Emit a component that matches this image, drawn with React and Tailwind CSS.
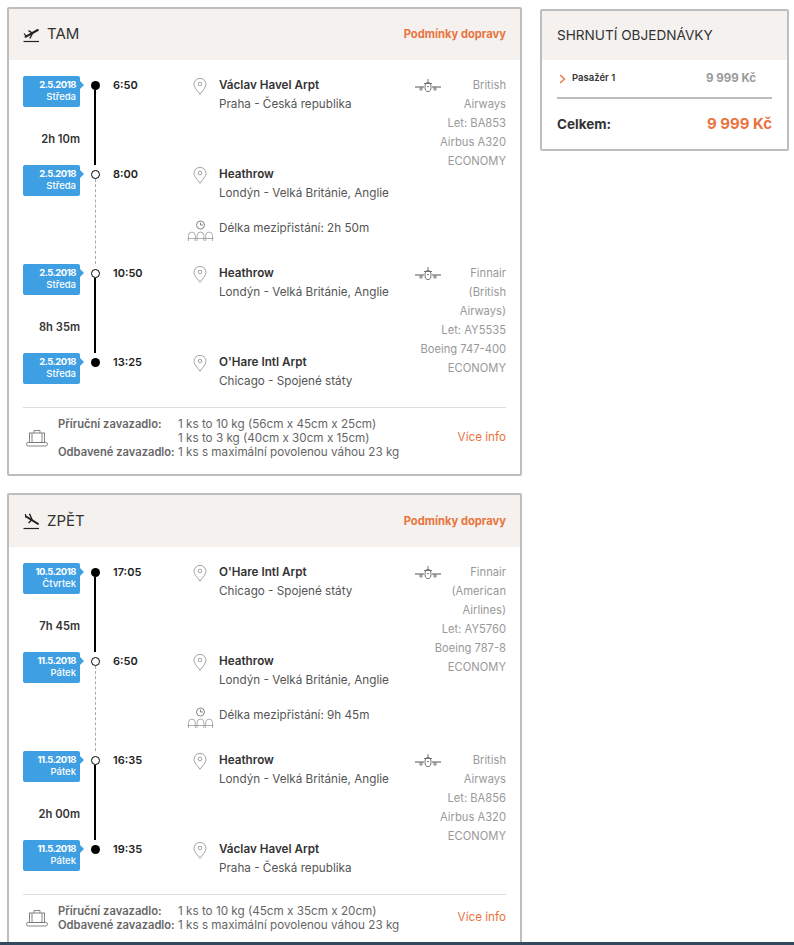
import React from 'react'

const font = { fontFamily: '"Inter", "Open Sans", sans-serif' }

function PlaneUp() {
  return (
    <svg width="17" height="17" viewBox="0 0 17 17" fill="none" stroke="#222">
      <path d="M2.5 10.8 14.8 4" strokeWidth="2" strokeLinecap="round" />
      <path d="M5.5 4.6 9.6 7.2 6.8 12.5" strokeWidth="1.4" />
      <path d="M1 7.6 3.4 10" strokeWidth="1.2" />
      <path d="M0.5 15.5H16" strokeWidth="1.2" />
    </svg>
  )
}

function PlaneDown() {
  return (
    <svg width="17" height="17" viewBox="0 0 17 17" fill="none" stroke="#222">
      <path d="M3 3.5 15 10.8" strokeWidth="2" strokeLinecap="round" />
      <path d="M6.5 0.8 9 6.6 5.6 10" strokeWidth="1.4" />
      <path d="M2.4 1 2.8 4.4" strokeWidth="1.2" />
      <path d="M0.5 15.5H16" strokeWidth="1.2" />
    </svg>
  )
}

function Pin() {
  return (
    <svg width="14" height="17" viewBox="0 0 14 17" fill="none" stroke="#999" strokeWidth="0.9" className="mt-[2px] shrink-0">
      <path d="M7 16.3C4.6 12.6 1 9.6 1 6.4A6 6 0 0 1 13 6.4C13 9.6 9.4 12.6 7 16.3Z" />
      <circle cx="7" cy="6" r="1.8" />
    </svg>
  )
}

function AirplaneFront() {
  return (
    <svg width="26" height="14" viewBox="0 0 26 14" fill="none" stroke="#555" strokeWidth="0.8">
      <path d="M0 8H9M17 8H26" strokeWidth="1" />
      <path d="M9 4.5H17" />
      <path d="M13 0V3" />
      <ellipse cx="13" cy="8" rx="3" ry="4.6" />
      <circle cx="6" cy="10" r="1.2" />
      <circle cx="20" cy="10" r="1.2" />
      <path d="M12 7.6H14" />
    </svg>
  )
}

function Seats() {
  return (
    <svg width="27" height="24" viewBox="0 0 27 24" fill="none" stroke="#999" strokeWidth="0.8" className="shrink-0">
      <circle cx="13.5" cy="6" r="4" stroke="#666" />
      <path d="M13.5 3.6V6H16" stroke="#666" />
      <path d="M1.5 22V16.5A3.4 3.4 0 0 1 8.3 16.5V22" />
      <path d="M10.1 22V16.5A3.4 3.4 0 0 1 16.9 16.5V22" />
      <path d="M18.7 22V16.5A3.4 3.4 0 0 1 25.5 16.5V22" />
      <path d="M0.5 19.5H26.5" />
    </svg>
  )
}

function Luggage() {
  return (
    <svg width="22" height="18" viewBox="0 0 22 18" fill="none" stroke="#777" strokeWidth="0.9" className="shrink-0">
      <rect x="3.5" y="4" width="15" height="9.5" />
      <path d="M8 4V1.5H14V4" />
      <path d="M6 4V13.5M16 4V13.5" />
      <rect x="0.5" y="13.5" width="21" height="3.5" rx="1.7" />
    </svg>
  )
}

function Row({ date, day, time, name, place, height, dot, line, duration, layover }) {
  return (
    <div className="flex" style={{ height }}>
      <div className="w-[57px] shrink-0">
        <div className="relative h-[31px] rounded-[2px] bg-[#3f9fe3] pt-[3px] pr-[4px] text-right text-[9.5px] leading-[12px] font-bold tracking-[-0.5px] text-white">
          <div>{date}</div>
          <div className="font-medium tracking-normal">{day}</div>
          <div className="absolute top-[5px] right-[-4px] h-0 w-0 border-y-[4px] border-l-[4px] border-y-transparent border-l-[#3f9fe3]" />
        </div>
        {duration && <div className="mt-[23px] text-right text-[11.2px] leading-[18px] font-semibold text-[#333]">{duration}</div>}
      </div>
      <div className="ml-[10px] flex w-[10px] shrink-0 flex-col items-center pt-[5px]">
        {dot === 'full' ? (
          <div className="h-[9px] w-[9px] shrink-0 rounded-full bg-black" />
        ) : (
          <div className="h-[9px] w-[9px] shrink-0 rounded-full border border-black bg-white" />
        )}
        {line === 'solid' && <div className="w-[2px] flex-1 bg-black" />}
        {line === 'dashed' && <div className="w-0 flex-1 border-l border-dashed border-[#aaa]" />}
      </div>
      <div className="ml-[13px] w-[80px] shrink-0 text-[11px] leading-[18px] font-semibold text-[#222]">{time}</div>
      <div className="min-w-0 flex-1">
        <div className="flex gap-[12px]">
          <Pin />
          <div className="text-[11.7px] leading-[19px] whitespace-nowrap">
            <div className="font-semibold text-[#333]">{name}</div>
            <div className="text-[#555]">{place}</div>
          </div>
        </div>
        {layover && (
          <div className="mt-[16px] ml-[-6px] flex items-center gap-[5px] text-[11.7px] text-[#555]">
            <Seats />
            <span className="mt-[-4px] whitespace-nowrap">Délka mezipřistání: {layover}</span>
          </div>
        )}
      </div>
    </div>
  )
}

function Carrier({ lines }) {
  return (
    <div className="relative w-[91px] shrink-0 text-right text-[11.2px] leading-[19px] text-[#999]">
      <div className="absolute top-[3px] left-0">
        <AirplaneFront />
      </div>
      {lines.map(l => (
        <div key={l} className="whitespace-nowrap">{l}</div>
      ))}
    </div>
  )
}

function Leg({ first, second, carrier }) {
  return (
    <div className="flex">
      <div className="min-w-0 flex-1">
        <Row {...first} />
        <Row {...second} />
      </div>
      <Carrier lines={carrier} />
    </div>
  )
}

function Baggage({ rows }) {
  return (
    <div className="flex items-center border-t border-[#ddd] pt-[9px] pb-[15px] text-[11.7px] leading-[14px]">
      <div className="mr-[10px] ml-[3px]">
        <Luggage />
      </div>
      <div className="flex-1">
        {rows.map((r, i) => (
          <div key={i} className="flex">
            <div className="w-[120px] shrink-0 text-[11.2px] font-semibold whitespace-nowrap text-[#666]">{r[0]}</div>
            <div className="whitespace-nowrap text-[#666]">{r[1]}</div>
          </div>
        ))}
      </div>
      <a className="mb-[2px] text-[#e8743f]">Více info</a>
    </div>
  )
}

function FlightCard({ icon, title, legs, baggage, headerClass }) {
  return (
    <div className="rounded-[2px] border-2 border-[#bdbdbd]">
      <div className={`flex items-center justify-between bg-[#f4f1ee] px-[14px] ${headerClass}`}>
        <div className="flex items-center gap-[7px] text-[15px] text-[#333]">
          {icon}
          <span>{title}</span>
        </div>
        <a className="text-[11.2px] font-bold text-[#e8743f]">Podmínky dopravy</a>
      </div>
      <div className="px-[14px] pt-[16px]">
        {legs.map((l, i) => (
          <Leg key={i} {...l} />
        ))}
        <Baggage rows={baggage} />
      </div>
    </div>
  )
}

const there = [
  {
    first: { date: '2.5.2018', day: 'Středa', time: '6:50', name: 'Václav Havel Arpt', place: 'Praha - Česká republika', height: 89, dot: 'full', line: 'solid', duration: '2h 10m' },
    second: { date: '2.5.2018', day: 'Středa', time: '8:00', name: 'Heathrow', place: 'Londýn - Velká Británie, Anglie', height: 99, dot: 'open', line: 'dashed', layover: '2h 50m' },
    carrier: ['British', 'Airways', 'Let: BA853', 'Airbus A320', 'ECONOMY'],
  },
  {
    first: { date: '2.5.2018', day: 'Středa', time: '10:50', name: 'Heathrow', place: 'Londýn - Velká Británie, Anglie', height: 89, dot: 'open', line: 'solid', duration: '8h 35m' },
    second: { date: '2.5.2018', day: 'Středa', time: '13:25', name: "O'Hare Intl Arpt", place: 'Chicago - Spojené státy', height: 54, dot: 'full' },
    carrier: ['Finnair', '(British', 'Airways)', 'Let: AY5535', 'Boeing 747-400', 'ECONOMY'],
  },
]

const back = [
  {
    first: { date: '10.5.2018', day: 'Čtvrtek', time: '17:05', name: "O'Hare Intl Arpt", place: 'Chicago - Spojené státy', height: 89, dot: 'full', line: 'solid', duration: '7h 45m' },
    second: { date: '11.5.2018', day: 'Pátek', time: '6:50', name: 'Heathrow', place: 'Londýn - Velká Británie, Anglie', height: 99, dot: 'open', line: 'dashed', layover: '9h 45m' },
    carrier: ['Finnair', '(American', 'Airlines)', 'Let: AY5760', 'Boeing 787-8', 'ECONOMY'],
  },
  {
    first: { date: '11.5.2018', day: 'Pátek', time: '16:35', name: 'Heathrow', place: 'Londýn - Velká Británie, Anglie', height: 89, dot: 'open', line: 'solid', duration: '2h 00m' },
    second: { date: '11.5.2018', day: 'Pátek', time: '19:35', name: 'Václav Havel Arpt', place: 'Praha - Česká republika', height: 54, dot: 'full' },
    carrier: ['British', 'Airways', 'Let: BA856', 'Airbus A320', 'ECONOMY'],
  },
]

function Summary() {
  return (
    <div className="mt-[2px] w-[249px] rounded-[2px] border-2 border-[#bdbdbd]">
      <div className="flex h-[49px] items-center bg-[#f4f1ee] px-[15px] text-[13.6px] text-[#333]">SHRNUTÍ OBJEDNÁVKY</div>
      <div className="px-[15px]">
        <div className="flex h-[39px] items-center justify-between border-b-2 border-[#bdbdbd] pr-[16px]">
          <div className="flex items-center gap-[6px]">
            <svg width="7" height="10" viewBox="0 0 7 10" fill="none" stroke="#e8743f" strokeWidth="1.4" className="ml-[2px]">
              <path d="M1.2 1 5.4 5 1.2 9" />
            </svg>
            <span className="text-[9.5px] font-semibold text-[#333]">Pasažér 1</span>
          </div>
          <span className="text-[11.5px] font-bold text-[#999]">9 999 Kč</span>
        </div>
        <div className="flex h-[50px] items-center justify-between">
          <span className="text-[13.5px] font-bold text-[#333]">Celkem:</span>
          <span className="text-[15px] font-bold text-[#e8743f]">9 999 Kč</span>
        </div>
      </div>
    </div>
  )
}

export default function App() {
  return (
    <div style={font} className="bg-white">
      <div className="flex h-[942px] items-start gap-[18px] overflow-hidden pt-[7px] pl-[7px]">
        <div className="flex w-[515px] shrink-0 flex-col gap-[17px]">
          <FlightCard
            icon={<PlaneUp />}
            title="TAM"
            legs={there}
            headerClass="h-[51px]"
            baggage={[
              ['Příruční zavazadlo:', '1 ks to 10 kg (56cm x 45cm x 25cm)'],
              ['', '1 ks to 3 kg (40cm x 30cm x 15cm)'],
              ['Odbavené zavazadlo:', '1 ks s maximální povolenou váhou 23 kg'],
            ]}
          />
          <FlightCard
            icon={<PlaneDown />}
            title="ZPĚT"
            legs={back}
            headerClass="h-[52px]"
            baggage={[
              ['Příruční zavazadlo:', '1 ks to 10 kg (45cm x 35cm x 20cm)'],
              ['Odbavené zavazadlo:', '1 ks s maximální povolenou váhou 23 kg'],
            ]}
          />
        </div>
        <Summary />
      </div>
      <div className="h-[3px] bg-[#34495e]" />
    </div>
  )
}
